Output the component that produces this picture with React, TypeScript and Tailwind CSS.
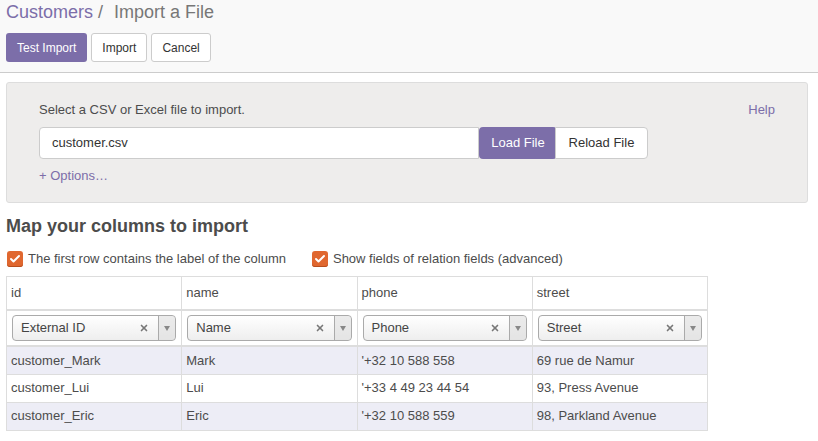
import { Check, X } from 'lucide-react';

const columns = [
  { key: 'id', field: 'External ID' },
  { key: 'name', field: 'Name' },
  { key: 'phone', field: 'Phone' },
  { key: 'street', field: 'Street' },
];

const rows = [
  ['customer_Mark', 'Mark', "'+32 10 588 558", '69 rue de Namur'],
  ['customer_Lui', 'Lui', "'+33 4 49 23 44 54", '93, Press Avenue'],
  ['customer_Eric', 'Eric', "'+32 10 588 559", '98, Parkland Avenue'],
];

function FieldSelect({ label }: { label: string }) {
  return (
    <div className="flex h-[26px] items-center rounded-[4px] border border-[#aaa] bg-gradient-to-b from-white to-[#eee] text-left text-[13px] text-[#444]">
      <span className="flex-1 pl-[8px]">{label}</span>
      <X className="mr-[9px] h-[10px] w-[10px] text-[#777]" strokeWidth={4} />
      <span className="flex h-full w-[17px] items-center justify-center rounded-r-[4px] border-l border-[#aaa] bg-[#ddd]/60">
        <span className="h-0 w-0 border-x-[3px] border-t-[5px] border-x-transparent border-t-[#888]" />
      </span>
    </div>
  );
}

function CheckBox() {
  return (
    <span className="flex h-[16px] w-[16px] items-center justify-center rounded-[3px] bg-[#e0672f] shadow-[inset_0_-1px_0_#b84e1e]">
      <Check className="h-[12px] w-[12px] text-white" strokeWidth={4} />
    </span>
  );
}

export default function App() {
  return (
    <div className="min-h-screen bg-white font-['Liberation_Sans',Arial,sans-serif] text-[#4c4c4c]">
      {/* control panel */}
      <div className="border-b border-[#ccc] bg-[#f9f9f9] px-[6px] pb-[10px]">
        <div className="flex items-baseline pt-[1px] text-[18px] leading-[22px]">
          <span className="text-[#7c6ea9]">Customers</span>
          <span className="ml-[5px] text-[#777]">/</span>
          <span className="ml-[11px] text-[#777]">Import a File</span>
        </div>
        <div className="mt-[10px] flex gap-[4px] text-[12px]">
          <button className="h-[29px] rounded-[3px] bg-[#7c6ea9] px-[11px] text-white">Test Import</button>
          <button className="h-[29px] rounded-[3px] border border-[#ccc] bg-white px-[10px] text-[#333]">Import</button>
          <button className="h-[29px] rounded-[3px] border border-[#ccc] bg-white px-[10px] text-[#333]">Cancel</button>
        </div>
      </div>

      <div className="pl-[6px] pr-[10px] pt-[9px]">
        {/* file picker */}
        <div className="rounded-[3px] border border-[#ddd] bg-[#eeedec] px-[32px] pb-[17px] pt-[17px] text-[13px]">
          <div className="flex items-center justify-between">
            <span>Select a CSV or Excel file to import.</span>
            <span className="text-[#7c6ea9]">Help</span>
          </div>
          <div className="mt-[7px] flex h-[32px]">
            <div className="flex w-[440px] items-center rounded-l-[4px] border border-[#ccc] bg-white pl-[12px] text-[#333]">
              customer.csv
            </div>
            <button className="w-[78px] rounded-[4px] bg-[#7c6ea9] text-white">Load File</button>
            <button className="-ml-[2px] w-[93px] rounded-r-[4px] border border-[#ccc] bg-white text-[#333]">Reload File</button>
          </div>
          <div className="mt-[7px] text-[#7c6ea9]">+ Options…</div>
        </div>

        {/* mapping */}
        <h2 className="mt-[11px] text-[18px] font-bold leading-[24px] text-[#4c4c4c]">Map your columns to import</h2>
        <div className="mt-[11px] flex items-center gap-[5px] pl-[1px] text-[13px]">
          <CheckBox />
          <span>The first row contains the label of the column</span>
          <span className="ml-[21px]">
            <CheckBox />
          </span>
          <span>Show fields of relation fields (advanced)</span>
        </div>

        <table className="mt-[7px] w-[702px] table-fixed border-collapse text-[13px]">
          <thead>
            <tr>
              {columns.map((c) => (
                <th key={c.key} className="h-[34px] border border-b-2 border-[#ddd] px-[4px] text-left font-normal">
                  {c.key}
                </th>
              ))}
            </tr>
            <tr>
              {columns.map((c) => (
                <th key={c.key} className="h-[36px] border border-b-2 border-[#ddd] px-[5px] font-normal">
                  <FieldSelect label={c.field} />
                </th>
              ))}
            </tr>
          </thead>
          <tbody>
            {rows.map((r, i) => (
              <tr key={i} className={i % 2 === 0 ? 'bg-[#ededf6]' : 'bg-white'}>
                {r.map((cell, j) => (
                  <td key={j} className="h-[28px] border border-[#ddd] px-[4px]">
                    {cell}
                  </td>
                ))}
              </tr>
            ))}
          </tbody>
        </table>
      </div>
    </div>
  );
}
